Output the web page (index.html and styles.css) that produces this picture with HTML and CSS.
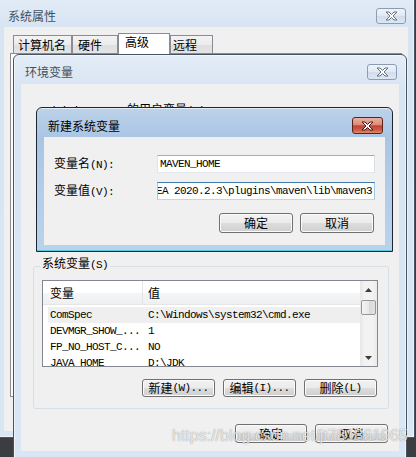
FILE: index.html
```html
<!DOCTYPE html>
<html lang="zh-CN">
<head>
<meta charset="utf-8">
<title>新建系统变量</title>
<link rel="stylesheet" href="styles.css">
</head>
<body>
<div class="screen">
  <div class="win outer inactive">
    <div class="titlebar">
      <span class="title">系统属性</span>
      <span class="close"><svg width="13" height="10" viewBox="0 0 13 10"><path d="M1 1h3l2.5 2.5L9 1h3L8 5l4 4H9L6.5 6.5 4 9H1l4-4z" fill="#fff" stroke="#66707c" stroke-width="1" stroke-linejoin="round"/></svg></span>
    </div>
    <div class="client outer-client">
      <div class="tabs">
        <div class="tab t1">计算机名</div>
        <div class="tab t2">硬件</div>
        <div class="tab t3 sel">高级</div>
        <div class="tab t4">远程</div>
      </div>
      <div class="tabpage"></div>
    </div>
  </div>

  <div class="win env inactive">
    <div class="titlebar">
      <span class="title">环境变量</span>
      <span class="close"><svg width="13" height="10" viewBox="0 0 13 10"><path d="M1 1h3l2.5 2.5L9 1h3L8 5l4 4H9L6.5 6.5 4 9H1l4-4z" fill="#fff" stroke="#66707c" stroke-width="1" stroke-linejoin="round"/></svg></span>
    </div>
    <div class="client env-client">
      <div class="ulabel"><span class="a">Administrator </span>的用户变量<span class="a">(U)</span></div>
      <fieldset class="group">
        <legend>系统变量<span class="a">(S)</span></legend>
        <div class="list">
          <div class="lv">
            <div class="lv-head">
              <div class="hc1">变量</div>
              <div class="hc2">值</div>
            </div>
            <div class="lv-body">
              <div class="row sel"><span class="c1 a">ComSpec</span><span class="c2 a">C:\Windows\system32\cmd.exe</span></div>
              <div class="row"><span class="c1 a">DEVMGR_SHOW_...</span><span class="c2 a">1</span></div>
              <div class="row"><span class="c1 a">FP_NO_HOST_C...</span><span class="c2 a">NO</span></div>
              <div class="row"><span class="c1 a">JAVA_HOME</span><span class="c2 a">D:\JDK</span></div>
            </div>
          </div>
          <div class="sb">
            <div class="sbtn"><svg width="7" height="4" viewBox="0 0 7 4"><path d="M0 4L3.5 0 7 4z" fill="#3c3c3c"/></svg></div>
            <div class="thumb"></div>
            <div class="sb-track"></div>
            <div class="sbtn"><svg width="7" height="4" viewBox="0 0 7 4"><path d="M0 0h7L3.5 4z" fill="#3c3c3c"/></svg></div>
          </div>
        </div>
        <div class="btns">
          <div class="btn">新建<span class="a">(W)...</span></div>
          <div class="btn">编辑<span class="a">(I)...</span></div>
          <div class="btn">删除<span class="a">(L)</span></div>
        </div>
      </fieldset>
      <div class="foot">
        <div class="btn ok">确定</div>
        <div class="btn cancel">取消</div>
      </div>
    </div>
  </div>

  <div class="win dlg active">
    <div class="titlebar">
      <span class="title">新建系统变量</span>
      <span class="close red"><svg width="13" height="10" viewBox="0 0 13 10"><path d="M1 1h3l2.5 2.5L9 1h3L8 5l4 4H9L6.5 6.5 4 9H1l4-4z" fill="#fff" stroke="#4a1810" stroke-width="1" stroke-linejoin="round"/></svg></span>
    </div>
    <div class="client dlg-client">
      <div class="field">
        <label>变量名<span class="a">(N):</span></label>
        <div class="input"><span class="a">MAVEN_HOME</span></div>
      </div>
      <div class="field">
        <label>变量值<span class="a">(V):</span></label>
        <div class="input focus"><span class="a">D:\Program Files\JetBrains\IntelliJ IDEA 2020.2.3\plugins\maven\lib\maven3</span></div>
      </div>
      <div class="dbtns">
        <div class="btn">确定</div>
        <div class="btn">取消</div>
      </div>
    </div>
  </div>

  <div class="watermark">https://blog.csdn.net/jt781861965</div>
</div>
</body>
</html>
```

FILE: styles.css
```css
* { box-sizing: border-box; }
body { margin: 0; background: #3b3d40; }

.screen {
  position: relative;
  width: 416px;
  height: 457px;
  overflow: hidden;
  font-family: "Noto Sans CJK SC", "Noto Sans", sans-serif;
  font-size: 12px;
  line-height: 16px;
  color: #000;
}

.a {
  font-family: "Liberation Mono", "Noto Sans CJK SC", monospace;
  font-size: 11px;
  letter-spacing: -0.6px;
}

/* windows */
.win {
  position: absolute;
  display: flex;
  flex-direction: column;
  border: 1px solid #47535f;
  border-radius: 6px 6px 0 0;
  box-shadow: inset 0 0 0 1px rgba(255, 255, 255, 0.55);
}
.inactive { background: linear-gradient(#e4edf7, #d7e4f2 34px, #d9e6f4); }
.active {
  border-color: #1c2530;
  background: linear-gradient(#bdd2ea, #aac5e4 30px, #b3cdea 60%, #bad3ec);
  box-shadow: inset 0 1px 0 rgba(255, 255, 255, 0.6), inset 0 -1px 0 #52c9dc;
}

.titlebar {
  flex: none;
  display: flex;
  align-items: flex-end;
  justify-content: space-between;
}
.title { line-height: 16px; color: #42505f; white-space: nowrap; }
.active .title { color: #000; }

.close {
  width: 30px;
  height: 16px;
  border: 1px solid #8d9cb1;
  border-radius: 3px;
  display: flex;
  align-items: center;
  justify-content: center;
  background: linear-gradient(#eef3fa, #dfe8f3 50%, #d0ddec 50%, #dce7f4);
}
.close.red {
  width: 31px;
  height: 17px;
  border-color: #5e2118;
  background: linear-gradient(#eab0a3, #dc8b79 45%, #c24530 52%, #cd5a44 80%, #e08b70);
}

.client { flex: 1; background: #f0f0f0; }

/* outer: 系统属性 */
.outer { left: -3px; top: -8px; width: 418px; height: 446px; padding: 0 6px 6px 6px; }
.outer .titlebar { height: 34px; padding: 0 2px 3px 4px; }
.outer-client { padding: 6px 0 0 6px; display: flex; flex-direction: column; }
.tabs { display: flex; align-items: flex-end; height: 21px; margin-left: 3px; }
.tab {
  height: 19px;
  border: 1px solid #898c95;
  background: linear-gradient(#f3f3f3, #ebebeb 50%, #dedede 50%, #e4e4e4);
  padding-top: 1px;
  white-space: nowrap;
}
.tab.sel {
  position: relative;
  z-index: 1;
  height: 21px;
  border-bottom: none;
  background: #fff;
  padding-top: 0;
}
.t1 { width: 59px; padding-left: 4px; }
.t2 { width: 46px; padding-left: 5px; }
.t3 { width: 52px; padding-left: 6px; }
.t4 { width: 43px; padding-left: 2px; }
.tabpage {
  margin-top: -1px;
  width: 392px;
  height: 344px;
  border: 1px solid #898c95;
  background: #fcfcfc;
}

/* env: 环境变量 */
.env { left: 13px; top: 54px; width: 394px; height: 405px; padding: 0 7px 7px 7px; }
.env .titlebar { height: 29px; padding: 0 2px 4px 4px; }
.env-client { display: flex; flex-direction: column; align-items: flex-start; }
.ulabel { margin: 17px 0 0 22px; height: 16px; white-space: nowrap; }

.group {
  margin: 140px 0 0 12px;
  width: 356px;
  min-width: 0;
  padding: 5px 0 11px 0;
  border: 1px solid #d5dfe5;
  border-radius: 3px;
}
.group legend {
  margin-left: 6px;
  padding: 0 2px 4px 2px;
  line-height: 12px;
  white-space: nowrap;
}

.list {
  margin-left: 8px;
  width: 336px;
  height: 87px;
  border: 1px solid #828790;
  background: #fff;
  display: flex;
}
.lv { flex: 1; display: flex; flex-direction: column; overflow: hidden; }
.lv-head {
  flex: none;
  height: 24px;
  display: flex;
  border-bottom: 1px solid #e5e5e5;
  background: linear-gradient(#ffffff 50%, #f4f5f7 50%, #eef0f2);
}
.hc1 { width: 100px; padding: 4px 0 0 7px; border-right: 1px solid #e5e5e5; }
.hc2 { padding: 4px 0 0 5px; }
.lv-body { padding-top: 2px; }
.row { flex: none; display: flex; align-items: center; height: 16px; margin-left: 5px; white-space: nowrap; }
.row.sel { background: #efefef; }
.c1 { width: 95px; padding-left: 2px; overflow: hidden; }
.c2 { padding-left: 5px; }

.sb {
  flex: none;
  width: 17px;
  display: flex;
  flex-direction: column;
  background: linear-gradient(90deg, #e6e6e6, #f2f2f2 25%, #f2f2f2 75%, #e9e9e9);
}
.sbtn { flex: none; height: 17px; display: flex; align-items: center; justify-content: center; }
.thumb {
  flex: none;
  margin: 2px 1px 0 1px;
  height: 15px;
  border: 1px solid #979797;
  border-radius: 2px;
  background: linear-gradient(90deg, #f4f4f4, #e8e8e8 50%, #d8d8d8 50%, #e2e2e2);
}
.sb-track { flex: 1; }

.btns { display: flex; justify-content: flex-end; gap: 8px; margin: 12px 11px 0 0; }
.btn {
  width: 73px;
  height: 18px;
  border: 1px solid #707070;
  border-radius: 3px;
  background: linear-gradient(#f2f2f2, #ebebeb 50%, #dddddd 50%, #cfcfcf);
  box-shadow: inset 0 0 0 1px #fbfbfb;
  display: flex;
  align-items: center;
  justify-content: center;
  line-height: 14px;
  white-space: nowrap;
}
.foot { align-self: stretch; display: flex; justify-content: flex-end; gap: 8px; margin-top: 15px; padding-right: 11px; }
.foot .btn { height: 19px; }
.foot .ok { width: 72px; }

/* dialog: 新建系统变量 */
.dlg { left: 36px; top: 107px; width: 357px; height: 145px; padding: 0 7px 6px 7px; }
.dlg .titlebar { height: 29px; padding: 0 2px 3px 4px; }
.dlg-client { padding: 18px 10px 0 10px; display: flex; flex-direction: column; }
.field { display: flex; align-items: center; height: 18px; }
.field + .field { margin-top: 9px; }
.field label { flex: none; width: 103px; white-space: nowrap; }
.input {
  flex: 1;
  height: 18px;
  border: 1px solid;
  border-color: #abadb3 #dbdfe6 #e3e9ef #e2e3ea;
  background: #fff;
  padding: 0 2px;
  display: flex;
  align-items: center;
  overflow: hidden;
  white-space: nowrap;
}
.input.focus {
  border-color: #3d7bad #a4c9e3 #b7d9ed #a4c9e3;
  justify-content: flex-end;
  padding-right: 2px;
}
.dbtns { display: flex; justify-content: flex-end; gap: 7px; margin: 13px 1px 0 0; }
.dbtns .btn { width: 74px; height: 20px; }

.watermark {
  position: absolute;
  left: 172px;
  top: 427px;
  font-family: "Liberation Sans", Arial, sans-serif;
  font-size: 16px;
  line-height: 18px;
  color: rgba(255, 255, 255, 0.75);
  text-shadow: 0 0 1px rgba(60, 60, 60, 0.6);
  white-space: nowrap;
}
```
